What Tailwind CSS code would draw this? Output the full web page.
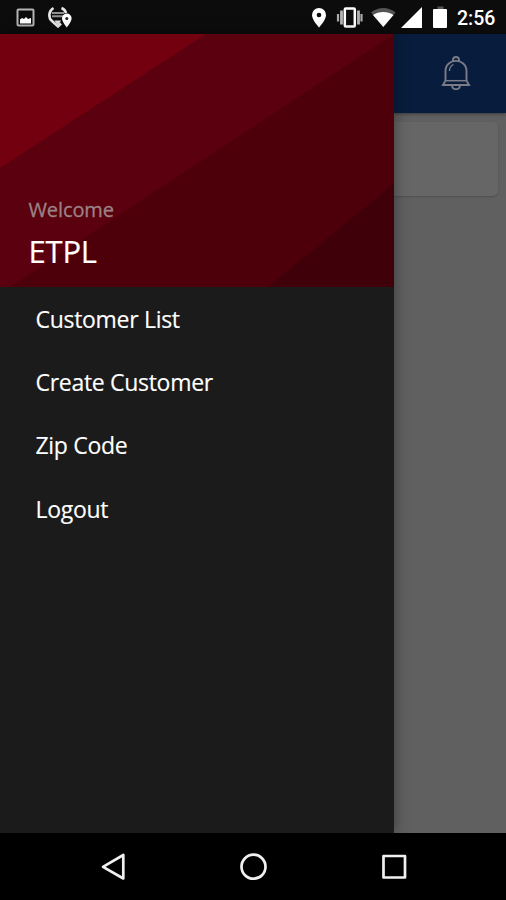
<!DOCTYPE html>
<html lang="en">
<head>
    <meta charset="UTF-8">
    <meta name="viewport" content="width=device-width, initial-scale=1.0">
    <title>ETPL Customers</title>
    <script src="https://cdn.jsdelivr.net/npm/@tailwindcss/browser@4"></script>
</head>
<body class="w-[506px] h-[900px] flex flex-col overflow-hidden bg-black font-['Open_Sans','Noto_Sans',sans-serif]">
    <!-- Status bar -->
    <header class="h-[34px] shrink-0 flex items-center justify-between bg-[#0c0c0c] text-white">
        <svg class="w-[90px] h-[34px]" viewBox="0 0 90 34" fill="none">
            <rect x="17.500" y="9.500" width="16" height="16" rx="1" stroke="#b4b4b4" stroke-width="2"/>
            <path d="M20 23.500v-4l2-1.500 2 1 2-2 2 2 3-1v5.500z" fill="#fff"/>
            <path d="M53.500 8c-5 3-5.500 9.500-1.500 13l6 5.500 3-3M61.500 8c2.500 1 4 3 4.500 5" stroke="#e8e8e8" stroke-width="2.600"/>
            <path d="M52 13h12M52 16.300h11" stroke="#909090" stroke-width="2"/>
            <path d="M54.500 20.500h6.500L58 26z" fill="#ddd"/>
            <path d="M66.800 13.500a4.800 4.800 0 0 0-4.800 4.800c0 3.700 4.800 9.200 4.800 9.200s4.800-5.500 4.800-9.200a4.800 4.800 0 0 0-4.800-4.800z" fill="#fff"/>
            <circle cx="66.800" cy="18.500" r="1.500" fill="#222"/>
        </svg>
        <div class="flex items-center">
            <svg class="w-[150px] h-[34px]" viewBox="304 0 150 34">
                <path d="M319 8a7 7 0 0 0-7 7c0 5 7 12.500 7 12.500s7-7.500 7-12.500a7 7 0 0 0-7-7z" fill="#fff"/>
                <circle cx="319" cy="15" r="2.300" fill="#0c0c0c"/>
                <rect x="344.800" y="8.500" width="10" height="18" rx="1" fill="none" stroke="#fff" stroke-width="2.500"/>
                <path d="M341.500 10.500v14M358.500 10.500v14" stroke="#b4b4b4" stroke-width="2.800"/>
                <path d="M338 14v7.500M361.500 14v7.500" stroke="#aaa" stroke-width="2.200"/>
                <path d="M371 12.500c7-6 17.500-6 24.500 0L383.300 27z" fill="#555"/>
                <path d="M373 15c5.500-4 15-4 20.500 0L383.300 27z" fill="#fff"/>
                <path d="M422 7v21h-21z" fill="#fff"/>
                <path d="M437.500 6.500h6v3h-6z" fill="#555"/>
                <rect x="433" y="9" width="14" height="19" rx="1" fill="#fff"/>
            </svg>
            <span class="w-[49px] ml-[3px] font-['Roboto',sans-serif] font-medium text-[19.500px] leading-none pt-[3px]">2:56</span>
        </div>
    </header>

    <div class="h-[799px] flex shrink-0">
        <!-- Drawer -->
        <nav class="w-[394px] shrink-0 bg-[#1b1b1b] text-white relative shadow-[0_0_14px_rgba(0,0,0,0.4)]">
            <div class="h-[253px] relative overflow-hidden">
                <svg class="absolute inset-0 w-[394px] h-[253px]" viewBox="0 0 394 253">
                    <path d="M0 0h394v253H0z" fill="#5a000e"/>
                    <path d="M0 0h206L0 134z" fill="#72000f"/>
                    <path d="M394 0L10 253h384z" fill="#4e000a"/>
                    <path d="M394 149L268 253h126z" fill="#40000a"/>
                </svg>
                <div class="relative pl-[28.500px] pt-[162px]">
                    <p class="text-[20px] leading-[28px] tracking-[-0.100px] text-[#9c8284] [-webkit-text-stroke:0.3px]">Welcome</p>
                    <h1 class="text-[31px] leading-[40px] mt-[7px] tracking-[-0.200px] [-webkit-text-stroke:0.2px]">ETPL</h1>
                </div>
            </div>
            <ul class="text-[23px] tracking-[-0.300px] pl-[35.500px] [-webkit-text-stroke:0.15px]">
                <li class="h-[63.300px] leading-[64px]">Customer List</li>
                <li class="h-[63.300px] leading-[64px]">Create Customer</li>
                <li class="h-[63.300px] leading-[63px]">Zip Code</li>
                <li class="h-[63.300px] leading-[64px]">Logout</li>
            </ul>
        </nav>

        <!-- Dimmed page behind the drawer -->
        <main class="flex-1 bg-[#606060]">
            <div class="h-[79px] bg-[#081d3d] flex items-center pl-[46px] shadow-[0_1px_3px_rgba(0,0,0,0.4)]">
                <svg class="w-[32px] h-[38px]" viewBox="440 54 32 38" fill="none" stroke="#7c7c88" stroke-width="1.900">
                    <path d="M453 60v-1a3 3 0 0 1 6 0v1"/>
                    <path d="M445.500 79.500V70c0-13.500 21-13.500 21 0v9.500l2.500 4.500h-26z"/>
                    <path d="M446 79.700h20" stroke-width="1.500"/>
                    <path d="M449.500 70c0-3.500 1.500-5.500 4-6.500" stroke-width="1.300"/>
                    <path d="M452 84.500c.5 5 7.500 5 8 0"/>
                </svg>
            </div>
            <div class="mt-[9px] mr-[8px] h-[74px] rounded-r-[5px] bg-[#666] shadow-[0_1px_2px_rgba(0,0,0,0.2)]"></div>
        </main>
    </div>

    <!-- Navigation bar -->
    <footer class="h-[67px] shrink-0 bg-black">
        <svg class="w-[506px] h-[67px]" viewBox="0 833 506 67" fill="none" stroke="#f0f0f0" stroke-width="2.700" stroke-linejoin="round">
            <path d="M123.300 855v23.500L103 866.800z"/>
            <circle cx="253.500" cy="866.700" r="12"/>
            <rect x="383.500" y="856" width="21.500" height="21.500"/>
        </svg>
    </footer>
</body>
</html>
